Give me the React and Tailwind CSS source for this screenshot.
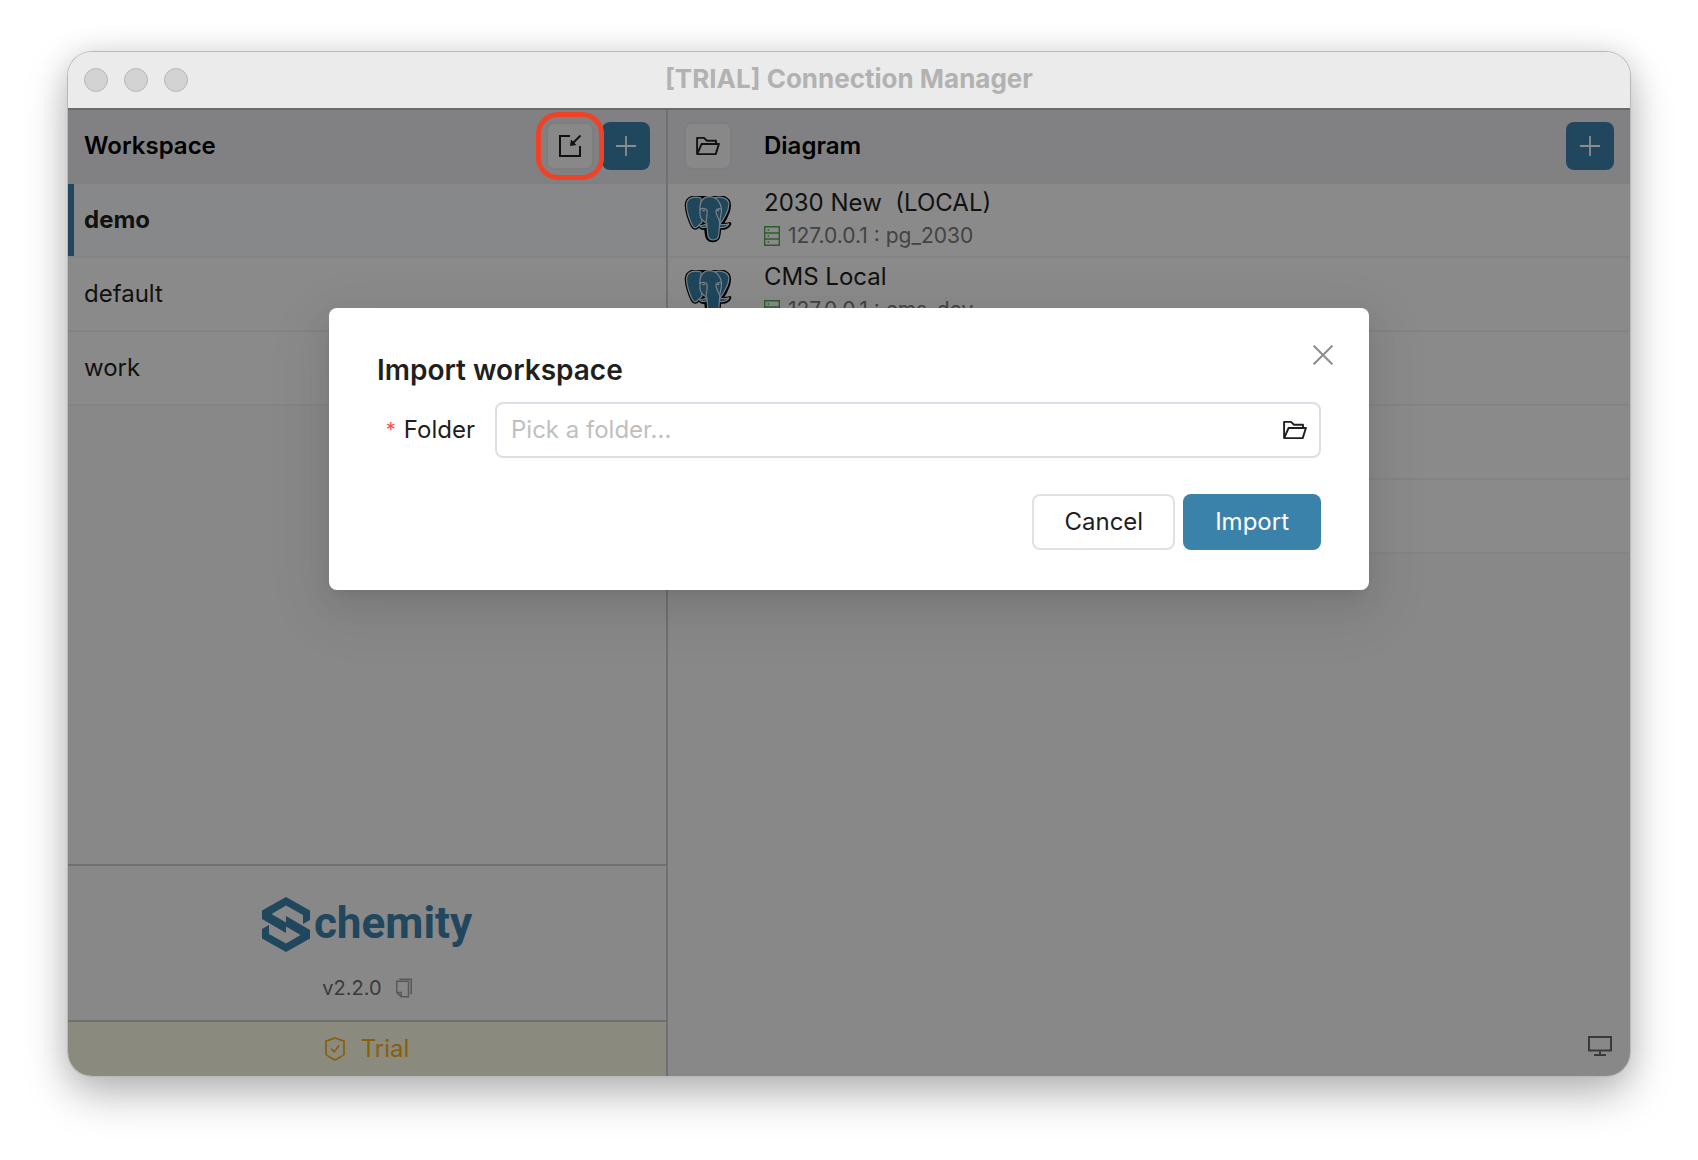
import React, { useState } from 'react';

const workspaces = ['demo', 'default', 'work'];

const diagrams = [
  { id: 1, name: '2030 New\u00a0 (LOCAL)', source: '127.0.0.1 : pg_2030' },
  { id: 2, name: 'CMS Local', source: '127.0.0.1 : cms_dev' },
  { id: 3 },
  { id: 4 },
  { id: 5 },
];

const PlusIcon = () => (
  <svg className="size-5" viewBox="0 0 20 20" fill="none" stroke="currentColor" strokeWidth="1.8">
    <path d="M10 0v20M0 10h20" />
  </svg>
);

const ImportIcon = () => (
  <svg className="size-6" viewBox="0 0 24 24" fill="none" stroke="currentColor" strokeWidth="2">
    <path d="M12 2H2v20h20V12" />
    <path d="M22.5 1.5L14 10" />
    <path d="M12 12l1-6.5 5.500 5.500z" fill="currentColor" stroke="none" />
  </svg>
);

const FolderOpenIcon = () => (
  <svg className="h-5 w-6" viewBox="0 0 24 20" fill="none" stroke="currentColor" strokeWidth="1.9" strokeLinejoin="round">
    <path d="M20 8V4.8h-9L8 1.9H1.1v16.2h18.6L22.9 8H5.6L1.4 17.6" />
  </svg>
);

const CloseIcon = () => (
  <svg className="size-5" viewBox="0 0 20 20" fill="none" stroke="currentColor" strokeWidth="2">
    <path d="M0.6 0.6l18.8 18.8M19.4 0.6L0.6 19.4" />
  </svg>
);

const DatabaseIcon = () => (
  <svg className="h-5 w-4" viewBox="0 0 16 20" fill="none" stroke="currentColor" strokeWidth="1.4">
    <path d="M0.7 0.7h14.6v18.6H0.7zM0.7 7h14.6M0.7 13h14.6" />
    <path d="M3.6 4h1.5M3.6 10h1.5M3.6 16h1.5" />
  </svg>
);

const CopyIcon = () => (
  <svg className="h-5 w-4" viewBox="0 0 16 20" fill="none" stroke="currentColor" strokeWidth="1.5">
    <path d="M3.2 1.2h12v15" />
    <path d="M0.7 3.2h11.8v15.6H5.2L0.7 14.4z" />
    <path d="M0.7 14.4h4.5v4.4" />
  </svg>
);

const ShieldIcon = () => (
  <svg className="h-6 w-5" viewBox="0 0 20 24" fill="none" stroke="currentColor" strokeWidth="1.7">
    <path d="M10 1l9 3.2v13.4c0 .6-9 5.400-9 5.400s-9-4.800-9-5.400V4.200z" />
    <path d="M6 11.6l3.2 3.2 5-6.6" />
  </svg>
);

const MonitorIcon = () => (
  <svg className="h-5 w-6" viewBox="0 0 24 20" fill="none" stroke="currentColor" strokeWidth="2">
    <path d="M1 1h22v13.5H1zM12 14.5V19M6 19h12" />
  </svg>
);

const PostgresIcon = () => (
  <svg className="size-12" viewBox="0 1 48 48" strokeLinejoin="round" strokeLinecap="round">
    {/* dark silhouette */}
    <g fill="#000" stroke="#000" strokeWidth="3.6">
      <path d="M17 3C10 .8 2.800 2.500 2.500 10c0 5.500 3 15.500 6 20.800 1.500 2.700 3.600 2.700 5.300.5l4.200-4z" />
      <path d="M16 3.500c4-2.200 9-2.500 13-.8 5-1.700 11.500-1.200 15 3 3.500 5.300-1.500 16.600-6.500 23.300 2 .8 5 .6 8-.1-1 3-5 4.700-10 4l-.6 6c-.4 4.500-2.500 6.600-6 6.600-4.500 0-6.200-2.600-6.400-7l-.5-5.500c-3 .5-5.500-.5-6-2.500l3-2z" />
    </g>
    <g fill="#3a80a7" stroke="#dcebf2" strokeWidth="1.200">
      <path d="M30 3c6.500-2 14-.3 14.800 5.400.6 6-4.800 16-9.300 21.100L31 27z" />
      <path d="M17 3C10 .8 2.800 2.500 2.500 10c0 5.500 3 15.500 6 20.800 1.500 2.700 3.600 2.700 5.300.5l4.200-4z" />
      <path d="M36 29c2.800 1.200 6.200.7 9-.1-1 2.600-5 4.400-10 3.600z" />
      <path d="M22 29c-1.500 1.600-4.500 1.300-6.500 1.900 1.500 2 4.800 2 7.500.8z" />
      <path d="M16 11c.8-6 4-9.300 9.500-9.300 6.500 0 11 5 12 12 .6 5-2.100 9.800-1.900 15.500l-.7 9.300c-.3 4.500-2.200 6.500-5.500 6.500-4 0-5.600-2.200-5.800-6.500l-.8-10.200c-3.600-1.800-6.600-4.800-6.800-8.800z" />
      <path d="M15.800 14.500c2-1.500 5.500-1.500 6.900.2 1.400 3.500-.4 7.500-.5 12.300M37.300 14c-2-.7-4.800-.2-5.400 1.400-.3 4.500 3 7.500 3.900 11.500" fill="none" />
      <path d="M19 15.500h1.500M33.600 15.500h1" fill="none" strokeWidth="1.500" />
    </g>
  </svg>
);

const Logo = () => (
  <div className="flex items-center text-[#3b82aa]">
    <svg className="h-[55px] w-12" viewBox="0 0 48 55" fill="currentColor">
      <path d="M24 0L48 13.500V23L41 27V18L24 8.500L9.500 17L24 25.500V19L48 33V41.500L24 55L0 41.500V32L7 28V37L24 46.500L38.500 38L24 29.500V36L0 22V13.500Z" />
    </svg>
    <span className="pb-1 pl-1 font-[Roboto,sans-serif] text-[44px] leading-[48px] font-bold">chemity</span>
  </div>
);

const App = () => {
  const [active, setActive] = useState('demo');
  const [open, setOpen] = useState(true);
  const [folder, setFolder] = useState('');

  return (
    <div className="flex min-h-screen flex-col bg-white px-[68px] pt-[52px] pb-[84px] font-[Inter,sans-serif] text-2xl text-[#1f1f1f]">
      <div className="flex flex-1 flex-col overflow-hidden rounded-[24px] bg-[#f7f7f7] shadow-[0_0_0_1px_#b9b9b9,0_18px_44px_rgba(0,0,0,0.28),0_0_30px_rgba(0,0,0,0.1)]">
        {/* Title bar */}
        <header className="grid h-14 shrink-0 grid-cols-[1fr_auto_1fr] items-center bg-[#ebebeb] px-4">
          <div className="flex gap-4">
            <span className="size-6 rounded-full border border-[#b8b8b8] bg-[#d3d3d3]" />
            <span className="size-6 rounded-full border border-[#b8b8b8] bg-[#d3d3d3]" />
            <span className="size-6 rounded-full border border-[#b8b8b8] bg-[#d3d3d3]" />
          </div>
          <h1 className="pb-0.5 text-[26px] font-bold text-[#b2b2b2]">[TRIAL] Connection Manager</h1>
        </header>

        <div className="relative flex flex-1 border-t-2 border-[#c3c3c3]">
          {/* Workspace list */}
          <aside className="flex w-[600px] shrink-0 flex-col border-r-2 border-[#cdcdcd]">
            <div className="flex items-center gap-2 border-b-2 border-[#eaeaec] bg-[#ececee] px-4 py-3">
              <h2 className="flex-1 font-semibold text-black">Workspace</h2>
              <div className="relative">
                <button
                  aria-label="Import workspace"
                  onClick={() => setOpen(true)}
                  className="flex size-12 items-center justify-center rounded-lg border-2 border-[#e4e6ea] bg-[#f8f8f8]"
                >
                  <ImportIcon />
                </button>
                <span className="pointer-events-none absolute -inset-2.5 z-20 rounded-[22px] border-[5px] border-[#ee4328]" />
              </div>
              <button aria-label="Add workspace" className="flex size-12 items-center justify-center rounded-lg bg-[#3b82aa] text-white">
                <PlusIcon />
              </button>
            </div>

            <ul className="flex-1">
              {workspaces.map((name) => (
                <li key={name} className="border-b-2 border-[#f1f1f1]">
                  <button
                    onClick={() => setActive(name)}
                    className={
                      name === active
                        ? 'flex h-[72px] w-full items-center border-l-6 border-[#3b82aa] bg-[#f4f8fb] pl-2.5 font-bold'
                        : 'flex h-[72px] w-full items-center bg-[#fcfcfc] pl-4'
                    }
                  >
                    {name}
                  </button>
                </li>
              ))}
            </ul>

            <div className="flex flex-col items-center border-t-2 border-[#cdcdcd] pt-[31px] pb-4">
              <Logo />
              <div className="mt-5 flex items-center gap-3.5 text-xl leading-8 text-[#6b6b6b]">
                <span>v2.2.0</span>
                <button aria-label="Copy version" className="text-[#a0a0a0]">
                  <CopyIcon />
                </button>
              </div>
            </div>
            <div className="flex h-14 items-center justify-center gap-4 border-t-2 border-[#cdcdcd] bg-[#fbfbe6] text-[#faad14]">
              <ShieldIcon />
              <span>Trial</span>
            </div>
          </aside>

          {/* Diagram list */}
          <main className="flex flex-1 flex-col">
            <div className="flex items-center gap-8 border-b-2 border-[#eaeaec] bg-[#ececee] px-4 py-3">
              <button aria-label="Open diagram" className="flex size-12 items-center justify-center rounded-lg border-2 border-[#e4e6ea] bg-[#f8f8f8]">
                <FolderOpenIcon />
              </button>
              <h2 className="flex-1 font-semibold text-black">Diagram</h2>
              <button aria-label="Add diagram" className="flex size-12 items-center justify-center rounded-lg bg-[#3b82aa] text-white">
                <PlusIcon />
              </button>
            </div>

            <ul className="flex-1">
              {diagrams.map((diagram) => (
                <li key={diagram.id} className="flex h-[74px] items-center gap-8 border-b-2 border-[#f1f1f1] bg-[#fcfcfc] px-4">
                  {diagram.name && (
                    <>
                      <PostgresIcon />
                      <div>
                        <p className="leading-8">{diagram.name}</p>
                        <p className="flex items-center gap-2 text-[21px] leading-[34px] text-[#7a7a7a]">
                          <span className="text-[#52a852]">
                            <DatabaseIcon />
                          </span>
                          {diagram.source}
                        </p>
                      </div>
                    </>
                  )}
                </li>
              ))}
            </ul>

            <div className="flex justify-end px-[18px] pb-5 text-[#6b6b6b]">
              <button aria-label="Display">
                <MonitorIcon />
              </button>
            </div>
          </main>

          {/* Import dialog */}
          {open && (
            <div className="absolute inset-x-0 -top-0.5 bottom-0 z-10 flex items-start justify-center bg-black/45 pt-[200px]">
              <div
                role="dialog"
                aria-label="Import workspace"
                className="relative w-[1040px] rounded-lg bg-white px-12 pt-11 pb-10 shadow-[0_12px_32px_rgba(0,0,0,0.08),0_6px_12px_-8px_rgba(0,0,0,0.12),0_18px_56px_16px_rgba(0,0,0,0.05)]"
              >
                <button
                  aria-label="Close"
                  onClick={() => setOpen(false)}
                  className="absolute top-[25px] right-6 flex size-11 items-center justify-center text-[#8c8c8c]"
                >
                  <CloseIcon />
                </button>

                <h3 className="text-[28px] leading-9 font-semibold">Import workspace</h3>

                <div className="mt-3.5 flex items-center">
                  <label htmlFor="folder" className="flex w-[118px] shrink-0 items-center justify-end gap-2 pr-5">
                    <span className="text-xl text-[#ff4d4f]">*</span>
                    Folder
                  </label>
                  <div className="flex h-14 flex-1 items-center rounded-lg border-2 border-[#dcdfe6] pr-3 pl-3.5">
                    <input
                      id="folder"
                      type="text"
                      value={folder}
                      onChange={(e) => setFolder(e.target.value)}
                      placeholder="Pick a folder..."
                      className="min-w-0 flex-1 outline-none placeholder:text-[#bfbfbf]"
                    />
                    <button aria-label="Browse">
                      <FolderOpenIcon />
                    </button>
                  </div>
                </div>

                <div className="mt-9 flex justify-end gap-2">
                  <button onClick={() => setOpen(false)} className="h-14 rounded-lg border-2 border-[#dfe1e6] px-[30px]">
                    Cancel
                  </button>
                  <button className="h-14 rounded-lg bg-[#3b82aa] px-8 text-white">Import</button>
                </div>
              </div>
            </div>
          )}
        </div>
      </div>
    </div>
  );
};

export default App;
